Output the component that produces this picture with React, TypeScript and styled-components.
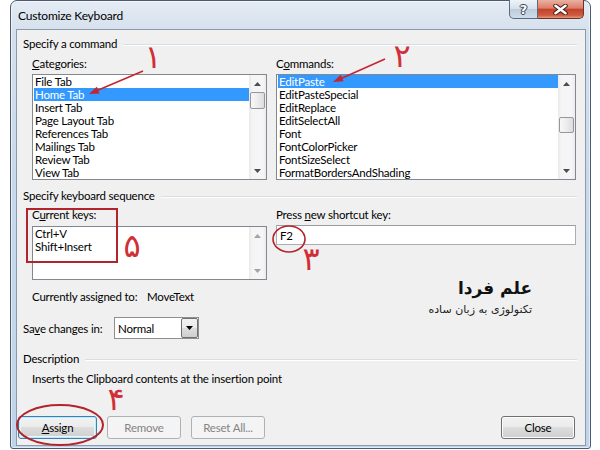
import React from 'react';
import styled, { createGlobalStyle, css } from 'styled-components';

const UI_FONT = `Lato, "Segoe UI", "Noto Sans", sans-serif`;
const FA_FONT = `"DejaVu Sans", sans-serif`;
const RED = '#c4262e';

const categories = ['File Tab', 'Home Tab', 'Insert Tab', 'Page Layout Tab', 'References Tab', 'Mailings Tab', 'Review Tab', 'View Tab'];
const commands = ['EditPaste', 'EditPasteSpecial', 'EditReplace', 'EditSelectAll', 'Font', 'FontColorPicker', 'FontSizeSelect', 'FormatBordersAndShading'];
const currentKeys = ['Ctrl+V', 'Shift+Insert'];

const GlobalStyle = createGlobalStyle`
  html, body {
    margin: 0;
    padding: 0;
    background: #fff;
  }
  body {
    font-family: ${UI_FONT};
    font-size: 11.5px;
    letter-spacing: -0.2px;
    color: #000;
  }
`;

const App = () => {
  return (
    <Stage>
      <GlobalStyle />
      <Window>
        <TitleBar>
          <Title>Customize Keyboard</Title>
          <Controls>
            <HelpButton>?</HelpButton>
            <CloseButton>
              <svg width="15" height="11" viewBox="0 0 15 11">
                <path d="M2.5 1.8 L12.5 9.2 M12.5 1.8 L2.5 9.2" stroke="#3a1a14" strokeWidth="4.4" strokeLinecap="round" />
                <path d="M2.5 1.8 L12.5 9.2 M12.5 1.8 L2.5 9.2" stroke="#fff" strokeWidth="2.6" strokeLinecap="round" />
              </svg>
            </CloseButton>
          </Controls>
        </TitleBar>
        <Client>
          <GroupHeader $top={7}>
            <span>Specify a command</span>
            <Rule />
          </GroupHeader>
          <Indented>
            <TwoCol>
              <div>
                <FieldLabel $top={6}><u>C</u>ategories:</FieldLabel>
                <ListBox $height={106} $top={3}>
                  <Items>
                    {categories.map((c) => (
                      <Row key={c} $selected={c === 'Home Tab'}>{c}</Row>
                    ))}
                  </Items>
                  <ScrollBar thumbTop={0} thumbHeight={17} />
                </ListBox>
              </div>
              <div>
                <FieldLabel $top={6}>C<u>o</u>mmands:</FieldLabel>
                <ListBox $height={106} $top={3}>
                  <Items>
                    {commands.map((c) => (
                      <Row key={c} $selected={c === 'EditPaste'}>{c}</Row>
                    ))}
                  </Items>
                  <ScrollBar thumbTop={25} thumbHeight={16} />
                </ListBox>
              </div>
            </TwoCol>
          </Indented>

          <GroupHeader $top={9}>
            <span>Specify keyboard sequence</span>
            <Rule />
          </GroupHeader>
          <Indented>
            <TwoCol>
              <div>
                <FieldLabel $top={5}>C<u>u</u>rrent keys:</FieldLabel>
                <ListBox $height={54} $top={4}>
                  <Items>
                    {currentKeys.map((k) => (
                      <Row key={k}>{k}</Row>
                    ))}
                  </Items>
                  <ScrollBar disabled />
                </ListBox>
                <Assigned>
                  <AssignedLabel>Currently assigned to:</AssignedLabel>
                  <span>MoveText</span>
                </Assigned>
              </div>
              <div>
                <FieldLabel $top={5}>Press <u>n</u>ew shortcut key:</FieldLabel>
                <KeyInput readOnly value="F2" />
                <Logo>
                  <LogoTitle>علم فردا</LogoTitle>
                  <LogoTagline>تکنولوژی به زبان ساده</LogoTagline>
                </Logo>
              </div>
            </TwoCol>
          </Indented>

          <SaveRow>
            <SaveLabel>Sa<u>v</u>e changes in:</SaveLabel>
            <Select>
              <span>Normal</span>
              <DropButton>
                <svg width="7" height="4" viewBox="0 0 7 4">
                  <path d="M0 0 H7 L3.5 4 Z" fill="#000" />
                </svg>
              </DropButton>
            </Select>
          </SaveRow>

          <GroupHeader $top={13}>
            <span>Description</span>
            <Rule />
          </GroupHeader>
          <Indented>
            <DescriptionText>Inserts the Clipboard contents at the insertion point</DescriptionText>
          </Indented>

          <ButtonRow>
            <Button $variant="default" $width={79}><u>A</u>ssign</Button>
            <Button $variant="disabled" $width={74}>Remove</Button>
            <Button $variant="disabled" $width={74}>Reset All...</Button>
            <CloseAction $width={74}>Close</CloseAction>
          </ButtonRow>
        </Client>
      </Window>
      <Annotations />
    </Stage>
  );
};

type ScrollBarProps = {
  thumbTop?: number;
  thumbHeight?: number;
  disabled?: boolean;
};

function ScrollBar({ thumbTop = 0, thumbHeight = 0, disabled = false }: ScrollBarProps) {
  const fill = disabled ? '#a3a3a3' : '#4d4d4d';
  return (
    <StyledScrollBar>
      <ArrowCell>
        <svg width="7" height="4" viewBox="0 0 7 4">
          <path d="M0 4 H7 L3.5 0 Z" fill={fill} />
        </svg>
      </ArrowCell>
      <Track>{!disabled && <Thumb style={{ marginTop: thumbTop, height: thumbHeight }} />}</Track>
      <ArrowCell>
        <svg width="7" height="4" viewBox="0 0 7 4">
          <path d="M0 0 H7 L3.5 4 Z" fill={fill} />
        </svg>
      </ArrowCell>
    </StyledScrollBar>
  );
}

// arrowhead triangle at (x2, y2) pointing away from (x1, y1)
function head(x1: number, y1: number, x2: number, y2: number, len = 10, half = 3.6) {
  const dx = x2 - x1;
  const dy = y2 - y1;
  const d = Math.hypot(dx, dy);
  const ux = dx / d;
  const uy = dy / d;
  const bx = x2 - ux * len;
  const by = y2 - uy * len;
  const px = -uy * half;
  const py = ux * half;
  return `${x2},${y2} ${bx + px},${by + py} ${bx - px},${by - py}`;
}

function Annotations() {
  return (
    <Overlay width="600" height="450" viewBox="0 0 600 450">
      <line x1="143" y1="71" x2="96" y2="91" stroke={RED} strokeWidth="1.6" />
      <polygon points={head(143, 71, 89, 94)} fill={RED} />
      <line x1="385" y1="59" x2="340" y2="79" stroke={RED} strokeWidth="1.6" />
      <polygon points={head(385, 59, 333, 82)} fill={RED} />

      <rect x="27" y="209" width="90" height="53" fill="none" stroke="#b1242b" strokeWidth="2" />
      <ellipse cx="289" cy="239" rx="16" ry="13" fill="none" stroke="#b1242b" strokeWidth="1.6" />
      <ellipse cx="60" cy="425" rx="43" ry="20" fill="none" stroke="#b1242b" strokeWidth="2" />

      <Digit x="153" y="68">۱</Digit>
      <Digit x="402" y="67">۲</Digit>
      <Digit x="311" y="270">۳</Digit>
      <Digit x="132" y="257">۵</Digit>
      <Digit x="116" y="410">۴</Digit>
    </Overlay>
  );
}

const Stage = styled.div`
  position: relative;
  width: 600px;
  height: 450px;
  overflow: hidden;
  padding-left: 10px;
  box-sizing: border-box;
  background: #fff;
`;

const Window = styled.div`
  width: 581px;
  height: 449px;
  box-sizing: border-box;
  border: 1px solid #4b5a6e;
  border-radius: 7px 7px 3px 3px;
  background: linear-gradient(180deg, #e4ebf3 0%, #d3dfec 8%, #c8d9ec 40%, #bfd3ea 100%);
  box-shadow: inset 0 0 0 1px rgba(255, 255, 255, 0.55);
  display: flex;
  flex-direction: column;
  padding: 0 4px 2px 5px;
`;

const TitleBar = styled.div`
  height: 28px;
  display: flex;
  align-items: flex-start;
  padding-left: 2px;
`;

const Title = styled.div`
  margin-top: 7px;
  font-size: 12px;
  line-height: 15px;
  color: #000;
`;

const Controls = styled.div`
  margin-left: auto;
  margin-right: 2px;
  margin-top: -1px;
  display: flex;
`;

const HelpButton = styled.div`
  width: 29px;
  height: 19px;
  box-sizing: border-box;
  border: 1px solid #5b6a7e;
  border-top: none;
  border-radius: 0 0 0 5px;
  background: linear-gradient(180deg, #eef3f8 0%, #d5e0ec 48%, #bccbdc 52%, #cfdceb 100%);
  display: flex;
  align-items: center;
  justify-content: center;
  font-family: "DejaVu Sans", sans-serif;
  font-weight: bold;
  font-size: 13px;
  letter-spacing: 0;
  color: #fff;
  text-shadow: 0 0 1px #334, 1px 0 0 #445, -1px 0 0 #445, 0 1px 0 #445, 0 -1px 0 #445;
`;

const CloseButton = styled.div`
  width: 46px;
  height: 19px;
  box-sizing: border-box;
  border: 1px solid #6a342c;
  border-top: none;
  border-left: none;
  border-radius: 0 0 5px 0;
  background: linear-gradient(180deg, #eab1a3 0%, #dc7e68 45%, #c4422a 52%, #cf5a3f 85%, #e59a7c 100%);
  display: flex;
  align-items: center;
  justify-content: center;
`;

const Client = styled.div`
  flex: 1;
  display: flex;
  flex-direction: column;
  border: 1px solid #8a99ab;
  background: #f0f0f0;
  padding: 0 8px 6px 6px;
`;

const GroupHeader = styled.div<{ $top: number }>`
  display: flex;
  align-items: center;
  gap: 6px;
  height: 14px;
  line-height: 14px;
  margin-top: ${({ $top }) => $top}px;
  white-space: nowrap;
`;

const Rule = styled.div`
  flex: 1;
  height: 1px;
  background: #d5dfe5;
  box-shadow: 0 1px 0 #fff;
`;

const Indented = styled.div`
  margin-left: 9px;
`;

const TwoCol = styled.div`
  display: grid;
  grid-template-columns: 235px 300px;
  column-gap: 9px;
`;

const FieldLabel = styled.div<{ $top: number }>`
  height: 14px;
  line-height: 14px;
  margin-top: ${({ $top }) => $top}px;
`;

const ListBox = styled.div<{ $height: number; $top: number }>`
  height: ${({ $height }) => $height}px;
  margin-top: ${({ $top }) => $top}px;
  box-sizing: border-box;
  border: 1px solid #828790;
  background: #fff;
  display: flex;
  overflow: hidden;
`;

const Items = styled.div`
  flex: 1;
  padding-left: 1px;
  min-width: 0;
`;

const Row = styled.div<{ $selected?: boolean }>`
  height: 13px;
  line-height: 13px;
  padding-left: 1px;
  white-space: nowrap;
  ${({ $selected }) =>
    $selected &&
    css`
      background: #3399ff;
      color: #fff;
    `}
`;

const StyledScrollBar = styled.div`
  width: 17px;
  display: flex;
  flex-direction: column;
  background: linear-gradient(90deg, #e9e9e9 0%, #f5f5f5 20%, #f5f5f5 80%, #ebebeb 100%);
`;

const ArrowCell = styled.div`
  height: 17px;
  display: flex;
  align-items: center;
  justify-content: center;
`;

const Track = styled.div`
  flex: 1;
  display: flex;
  flex-direction: column;
  align-items: center;
`;

const Thumb = styled.div`
  width: 15px;
  box-sizing: border-box;
  border: 1px solid #979797;
  border-radius: 2px;
  background: linear-gradient(90deg, #f7f7f7 0%, #ececec 50%, #dcdcdc 100%);
`;

const Assigned = styled.div`
  display: flex;
  margin-top: 10px;
  height: 14px;
  line-height: 14px;
`;

const AssignedLabel = styled.span`
  width: 115px;
`;

const KeyInput = styled.input`
  display: block;
  width: 100%;
  height: 20px;
  margin: 3px 0 0;
  box-sizing: border-box;
  border: 1px solid #abadb3;
  border-top-color: #9a9ca3;
  background: #fff;
  padding: 0 3px;
  font-family: ${UI_FONT};
  font-size: 11.5px;
  letter-spacing: -0.2px;
  color: #000;
  outline: none;
`;

const Logo = styled.div`
  direction: rtl;
  padding-right: 44px;
  margin-top: 32px;
  display: flex;
  flex-direction: column;
  align-items: flex-start;
  font-family: ${FA_FONT};
  letter-spacing: 0;
`;

const LogoTitle = styled.div`
  font-size: 17px;
  font-weight: bold;
  line-height: 22px;
  color: #111;
`;

const LogoTagline = styled.div`
  font-size: 11px;
  line-height: 14px;
  margin-top: 4px;
  color: #222;
`;

const SaveRow = styled.div`
  display: flex;
  align-items: center;
  margin-top: 0;
  height: 22px;
`;

const SaveLabel = styled.span`
  width: 91px;
`;

const Select = styled.div`
  width: 85px;
  height: 22px;
  box-sizing: border-box;
  border: 1px solid #8e8f8f;
  background: #fff;
  display: flex;
  align-items: center;
  padding-left: 3px;
`;

const DropButton = styled.div`
  margin-left: auto;
  width: 17px;
  height: 20px;
  box-sizing: border-box;
  border: 1px solid #707070;
  border-radius: 2px;
  background: linear-gradient(180deg, #f2f2f2 0%, #ebebeb 50%, #dddddd 50%, #cfcfcf 100%);
  display: flex;
  align-items: center;
  justify-content: center;
`;

const DescriptionText = styled.div`
  margin-top: 6px;
  height: 14px;
  line-height: 14px;
`;

const ButtonRow = styled.div`
  margin-top: auto;
  margin-left: -5px;
  margin-right: 2px;
  display: flex;
  align-items: center;
  gap: 10px;
`;

const Button = styled.div<{ $variant?: 'normal' | 'default' | 'disabled'; $width: number }>`
  width: ${({ $width }) => $width}px;
  height: 23px;
  box-sizing: border-box;
  border: 1px solid #707070;
  border-radius: 3px;
  background: linear-gradient(180deg, #f2f2f2 0%, #ebebeb 50%, #dddddd 50%, #cfcfcf 100%);
  box-shadow: inset 0 0 0 1px #fcfcfc;
  display: flex;
  align-items: center;
  justify-content: center;
  color: #000;
  ${({ $variant }) =>
    $variant === 'default' &&
    css`
      border-color: #3c7fb1;
      box-shadow: inset 0 0 0 1px #bfe9fb, inset 0 0 0 2px #eaf6fd;
    `}
  ${({ $variant }) =>
    $variant === 'disabled' &&
    css`
      border-color: #adb2b5;
      background: #f4f4f4;
      box-shadow: none;
      color: #838383;
    `}
`;

const CloseAction = styled(Button)`
  margin-left: auto;
`;

const Overlay = styled.svg`
  position: absolute;
  top: 0;
  left: 0;
  pointer-events: none;
`;

const Digit = styled.text`
  font-family: ${FA_FONT};
  font-size: 32px;
  letter-spacing: 0;
  text-anchor: middle;
  fill: #d12f37;
`;

export default App;
